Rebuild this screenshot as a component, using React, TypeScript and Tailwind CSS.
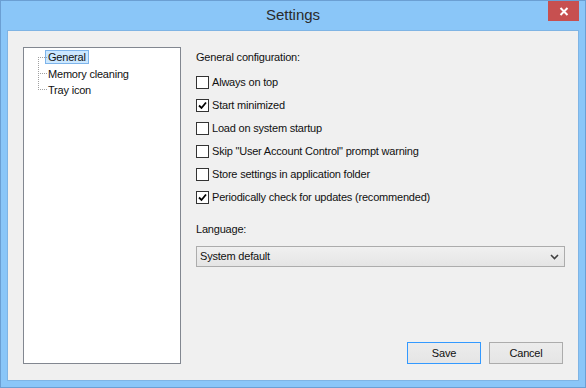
import { useState } from "react";

const options = [
  { label: "Always on top", checked: false },
  { label: "Start minimized", checked: true },
  { label: "Load on system startup", checked: false },
  { label: 'Skip "User Account Control" prompt warning', checked: false },
  { label: "Store settings in application folder", checked: false },
  { label: "Periodically check for updates (recommended)", checked: true },
];

const treeItems = ["General", "Memory cleaning", "Tray icon"];

function CheckBox({ checked }: { checked: boolean }) {
  return (
    <span className="flex h-[13px] w-[13px] shrink-0 items-center justify-center border border-[#333] bg-white">
      {checked && (
        <svg width="9" height="9" viewBox="0 0 9 9">
          <path d="M1 4.5 L3.5 7 L8 1.5" fill="none" stroke="#000" strokeWidth="1.8" />
        </svg>
      )}
    </span>
  );
}

export default function App() {
  const [selected] = useState("General");

  return (
    <div className="flex h-[388px] w-[586px] flex-col border border-[#6b9fd3] bg-[#8ac6f8] px-[6px] pb-[6px] font-['Liberation_Sans',Arial,sans-serif] text-[11px] tracking-[-0.2px] text-[#111]">
      {/* Title bar */}
      <div className="relative flex h-[29px] shrink-0 items-center justify-center">
        <span className="text-[15px] tracking-normal text-[#2b2b2b]">Settings</span>
        <div className="absolute right-0 top-0 flex h-[20px] w-[31px] items-center justify-center bg-[#c75050]">
          <svg width="10" height="9" viewBox="0 0 10 9">
            <path d="M1.5 1 L8.5 8 M8.5 1 L1.5 8" stroke="#fff" strokeWidth="2" />
          </svg>
        </div>
      </div>

      {/* Client area */}
      <div className="flex flex-1 border border-[#7fb4e4] bg-[#f0f0f0] pb-[16px] pl-[15px] pr-[13px] pt-[16px]">
        {/* Tree */}
        <div className="relative h-full w-[158px] shrink-0 border border-[#828790] bg-white">
          <svg className="absolute left-[14px] top-[9px]" width="10" height="34" viewBox="0 0 10 34">
            <path d="M0.5 0 V33" stroke="#a0a0a0" strokeDasharray="1 1" />
            <path d="M0 0.5 H9 M0 16.5 H9 M0 32.5 H9" stroke="#a0a0a0" strokeDasharray="1 1" />
          </svg>
          <ul className="ml-[21px] mt-[1px] flex flex-col">
            {treeItems.map((item) => (
              <li key={item} className="flex h-[16.5px] items-center">
                <span
                  className={
                    item === selected
                      ? "border border-[#7eb4ea] bg-[#cce8ff] px-[2px] leading-[12px]"
                      : "border border-transparent px-[2px] leading-[12px]"
                  }
                >
                  {item}
                </span>
              </li>
            ))}
          </ul>
        </div>

        {/* Settings panel */}
        <div className="ml-[15px] flex flex-1 flex-col">
          <p className="mt-[3px] h-[14px] leading-[14px]">General configuration:</p>

          <div className="mt-[12px] flex flex-col gap-[10px]">
            {options.map((opt) => (
              <label key={opt.label} className="flex h-[13px] items-center gap-[3px]">
                <CheckBox checked={opt.checked} />
                <span className="leading-[13px]">{opt.label}</span>
              </label>
            ))}
          </div>

          <p className="mt-[18px] h-[14px] leading-[14px]">Language:</p>

          <div className="mt-[10px] flex h-[21px] items-center justify-between border border-[#acacac] bg-gradient-to-b from-[#f0f0f0] to-[#e5e5e5] pl-[3px] pr-[5px]">
            <span>System default</span>
            <svg width="9" height="6" viewBox="0 0 9 6">
              <path d="M1 1 L4.5 4.5 L8 1" fill="none" stroke="#404040" strokeWidth="1.6" />
            </svg>
          </div>

          <div className="mt-auto flex justify-end gap-[8px] pr-[2px]">
            <button className="h-[22px] w-[74px] border border-[#3399ff] bg-gradient-to-b from-[#ececec] to-[#e5e5e5] text-[11px]">
              Save
            </button>
            <button className="h-[22px] w-[74px] border border-[#acacac] bg-gradient-to-b from-[#ececec] to-[#e5e5e5] text-[11px]">
              Cancel
            </button>
          </div>
        </div>
      </div>
    </div>
  );
}
